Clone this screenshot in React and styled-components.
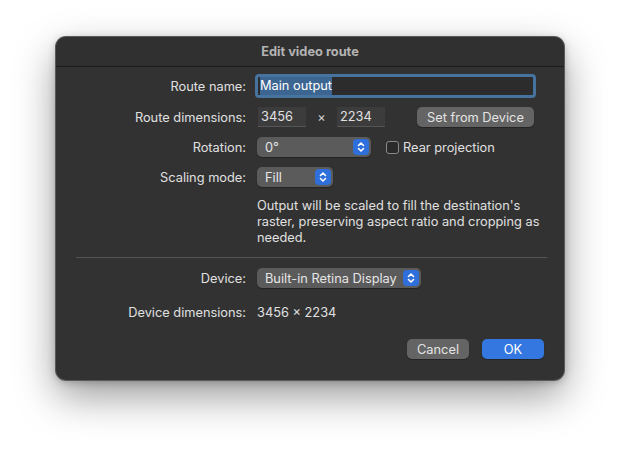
import React from "react";
import styled, { createGlobalStyle } from "styled-components";

const GlobalStyle = createGlobalStyle`
  html, body {
    margin: 0;
    padding: 0;
    background: #ffffff;
    font-family: Inter, "Liberation Sans", sans-serif;
    -webkit-font-smoothing: antialiased;
  }
`;

const Page = styled.div`
  width: 620px;
  height: 454px;
  padding-top: 37px;
  box-sizing: border-box;
  display: flex;
  justify-content: center;
  align-items: flex-start;
`;

const Window = styled.div`
  width: 508px;
  height: 343px;
  box-sizing: border-box;
  background: #323232;
  border-radius: 10px;
  box-shadow: 0 0 0 1px #5a5a5a, 0 16px 40px rgba(0, 0, 0, 0.4), 0 2px 8px rgba(0, 0, 0, 0.25);
  display: flex;
  flex-direction: column;
  color: #e0e0e0;
  font-size: 12.8px;
  overflow: hidden;
`;

const TitleBar = styled.div`
  height: 29px;
  flex: none;
  display: flex;
  align-items: center;
  justify-content: center;
  background: #303030;
  border-bottom: 1px solid #1c1c1c;
  color: #b3b3b3;
  font-weight: 700;
  font-size: 12.8px;
`;

const Body = styled.div`
  padding: 7px 20px 20px;
  display: flex;
  flex-direction: column;
  flex: 1;
`;

const Form = styled.div`
  display: grid;
  grid-template-columns: 170px 1fr;
  column-gap: 11px;
  row-gap: 10px;
  align-items: center;
`;

const Label = styled.div`
  text-align: right;
  white-space: nowrap;
  margin-top: ${(p) => p.$mt || 0}px;
`;

const Cell = styled.div`
  display: flex;
  align-items: center;
  gap: ${(p) => p.$gap || 0}px;
  margin-top: ${(p) => p.$mt || 0}px;
`;

const FocusField = styled.div`
  width: 281px;
  height: 24px;
  box-sizing: border-box;
  margin-left: -2px;
  border: 3px solid #47739f;
  border-radius: 4px;
  background: #2c2c2c;
  display: flex;
  align-items: center;
  padding-left: 2px;
  color: #ffffff;
`;

const Selected = styled.span`
  background: #3d6591;
  padding: 1px 0 2px;
`;

const NumField = styled.div`
  width: 48px;
  height: 20px;
  box-sizing: border-box;
  background: #3c3c3c;
  border-bottom: 1px solid #555;
  display: flex;
  align-items: center;
  padding-left: 3px;
  margin-left: ${(p) => p.$ml || 0}px;
`;

const Times = styled.span`
  width: 31px;
  text-align: center;
  color: #d0d0d0;
`;

const PushButton = styled.div`
  height: 20px;
  box-sizing: border-box;
  width: ${(p) => p.$w}px;
  margin-left: ${(p) => p.$ml || 0}px;
  border-radius: 5px;
  background: ${(p) => (p.$primary ? "#3477e0" : "#646464")};
  box-shadow: 0 1px 1px rgba(0, 0, 0, 0.3);
  color: ${(p) => (p.$primary ? "#ffffff" : "#e3e3e3")};
  display: flex;
  align-items: center;
  justify-content: center;
`;

const Popup = styled.div`
  height: 20px;
  box-sizing: border-box;
  width: ${(p) => p.$w}px;
  border-radius: 5px;
  background: #5b5b5b;
  box-shadow: 0 1px 1px rgba(0, 0, 0, 0.3);
  display: flex;
  align-items: center;
  justify-content: space-between;
  padding: 0 2px 0 8px;
  color: #e6e6e6;
`;

const Stepper = styled.div`
  width: 16px;
  height: 16px;
  border-radius: 4px;
  background: #2f6fdb;
  display: flex;
  align-items: center;
  justify-content: center;
`;

const CheckRow = styled.label`
  display: flex;
  align-items: center;
  gap: 4px;
  margin-left: 15px;
`;

const Box = styled.span`
  width: 11px;
  height: 11px;
  border: 1px solid #8a8a8a;
  border-radius: 3px;
  background: #2a2a2a;
`;

const Note = styled.div`
  line-height: 16px;
  width: 290px;
  margin-top: 1px;
`;

const Separator = styled.div`
  grid-column: 1 / -1;
  height: 1px;
  margin-top: 1px;
  background: #555555;
`;

const Footer = styled.div`
  display: flex;
  justify-content: flex-end;
  gap: 13px;
  margin-top: 19px;
`;

const Chevrons = () => (
  <svg width="10" height="12" viewBox="0 0 10 12" fill="none" stroke="#fff" strokeWidth="1.6" strokeLinecap="round" strokeLinejoin="round">
    <path d="M2.5 4.5 L5 2 L7.5 4.5" />
    <path d="M2.5 7.5 L5 10 L7.5 7.5" />
  </svg>
);

const PopupButton = ({ w, children }) => (
  <Popup $w={w}>
    <span>{children}</span>
    <Stepper>
      <Chevrons />
    </Stepper>
  </Popup>
);

export default function App() {
  return (
    <Page>
      <GlobalStyle />
      <Window>
        <TitleBar>Edit video route</TitleBar>
        <Body>
          <Form>
            <Label>Route name:</Label>
            <Cell>
              <FocusField>
                <Selected>Main output</Selected>
              </FocusField>
            </Cell>

            <Label>Route dimensions:</Label>
            <Cell $mt={-1}>
              <NumField $ml={1}>3456</NumField>
              <Times>×</Times>
              <NumField>2234</NumField>
              <PushButton $w={117} $ml={32}>Set from Device</PushButton>
            </Cell>

            <Label>Rotation:</Label>
            <Cell>
              <PopupButton w={114}>0°</PopupButton>
              <CheckRow>
                <Box />
                Rear projection
              </CheckRow>
            </Cell>

            <Label>Scaling mode:</Label>
            <Cell>
              <PopupButton w={76}>Fill</PopupButton>
            </Cell>

            <span />
            <Note>
              Output will be scaled to fill the destination's raster, preserving aspect ratio and cropping as
              needed.
            </Note>

            <Separator />

            <Label>Device:</Label>
            <Cell>
              <PopupButton w={164}>Built-in Retina Display</PopupButton>
            </Cell>

            <Label $mt={7}>Device dimensions:</Label>
            <Cell $mt={7}>3456 × 2234</Cell>
          </Form>
          <Footer>
            <PushButton $w={62}>Cancel</PushButton>
            <PushButton $w={62} $primary>OK</PushButton>
          </Footer>
        </Body>
      </Window>
    </Page>
  );
}
